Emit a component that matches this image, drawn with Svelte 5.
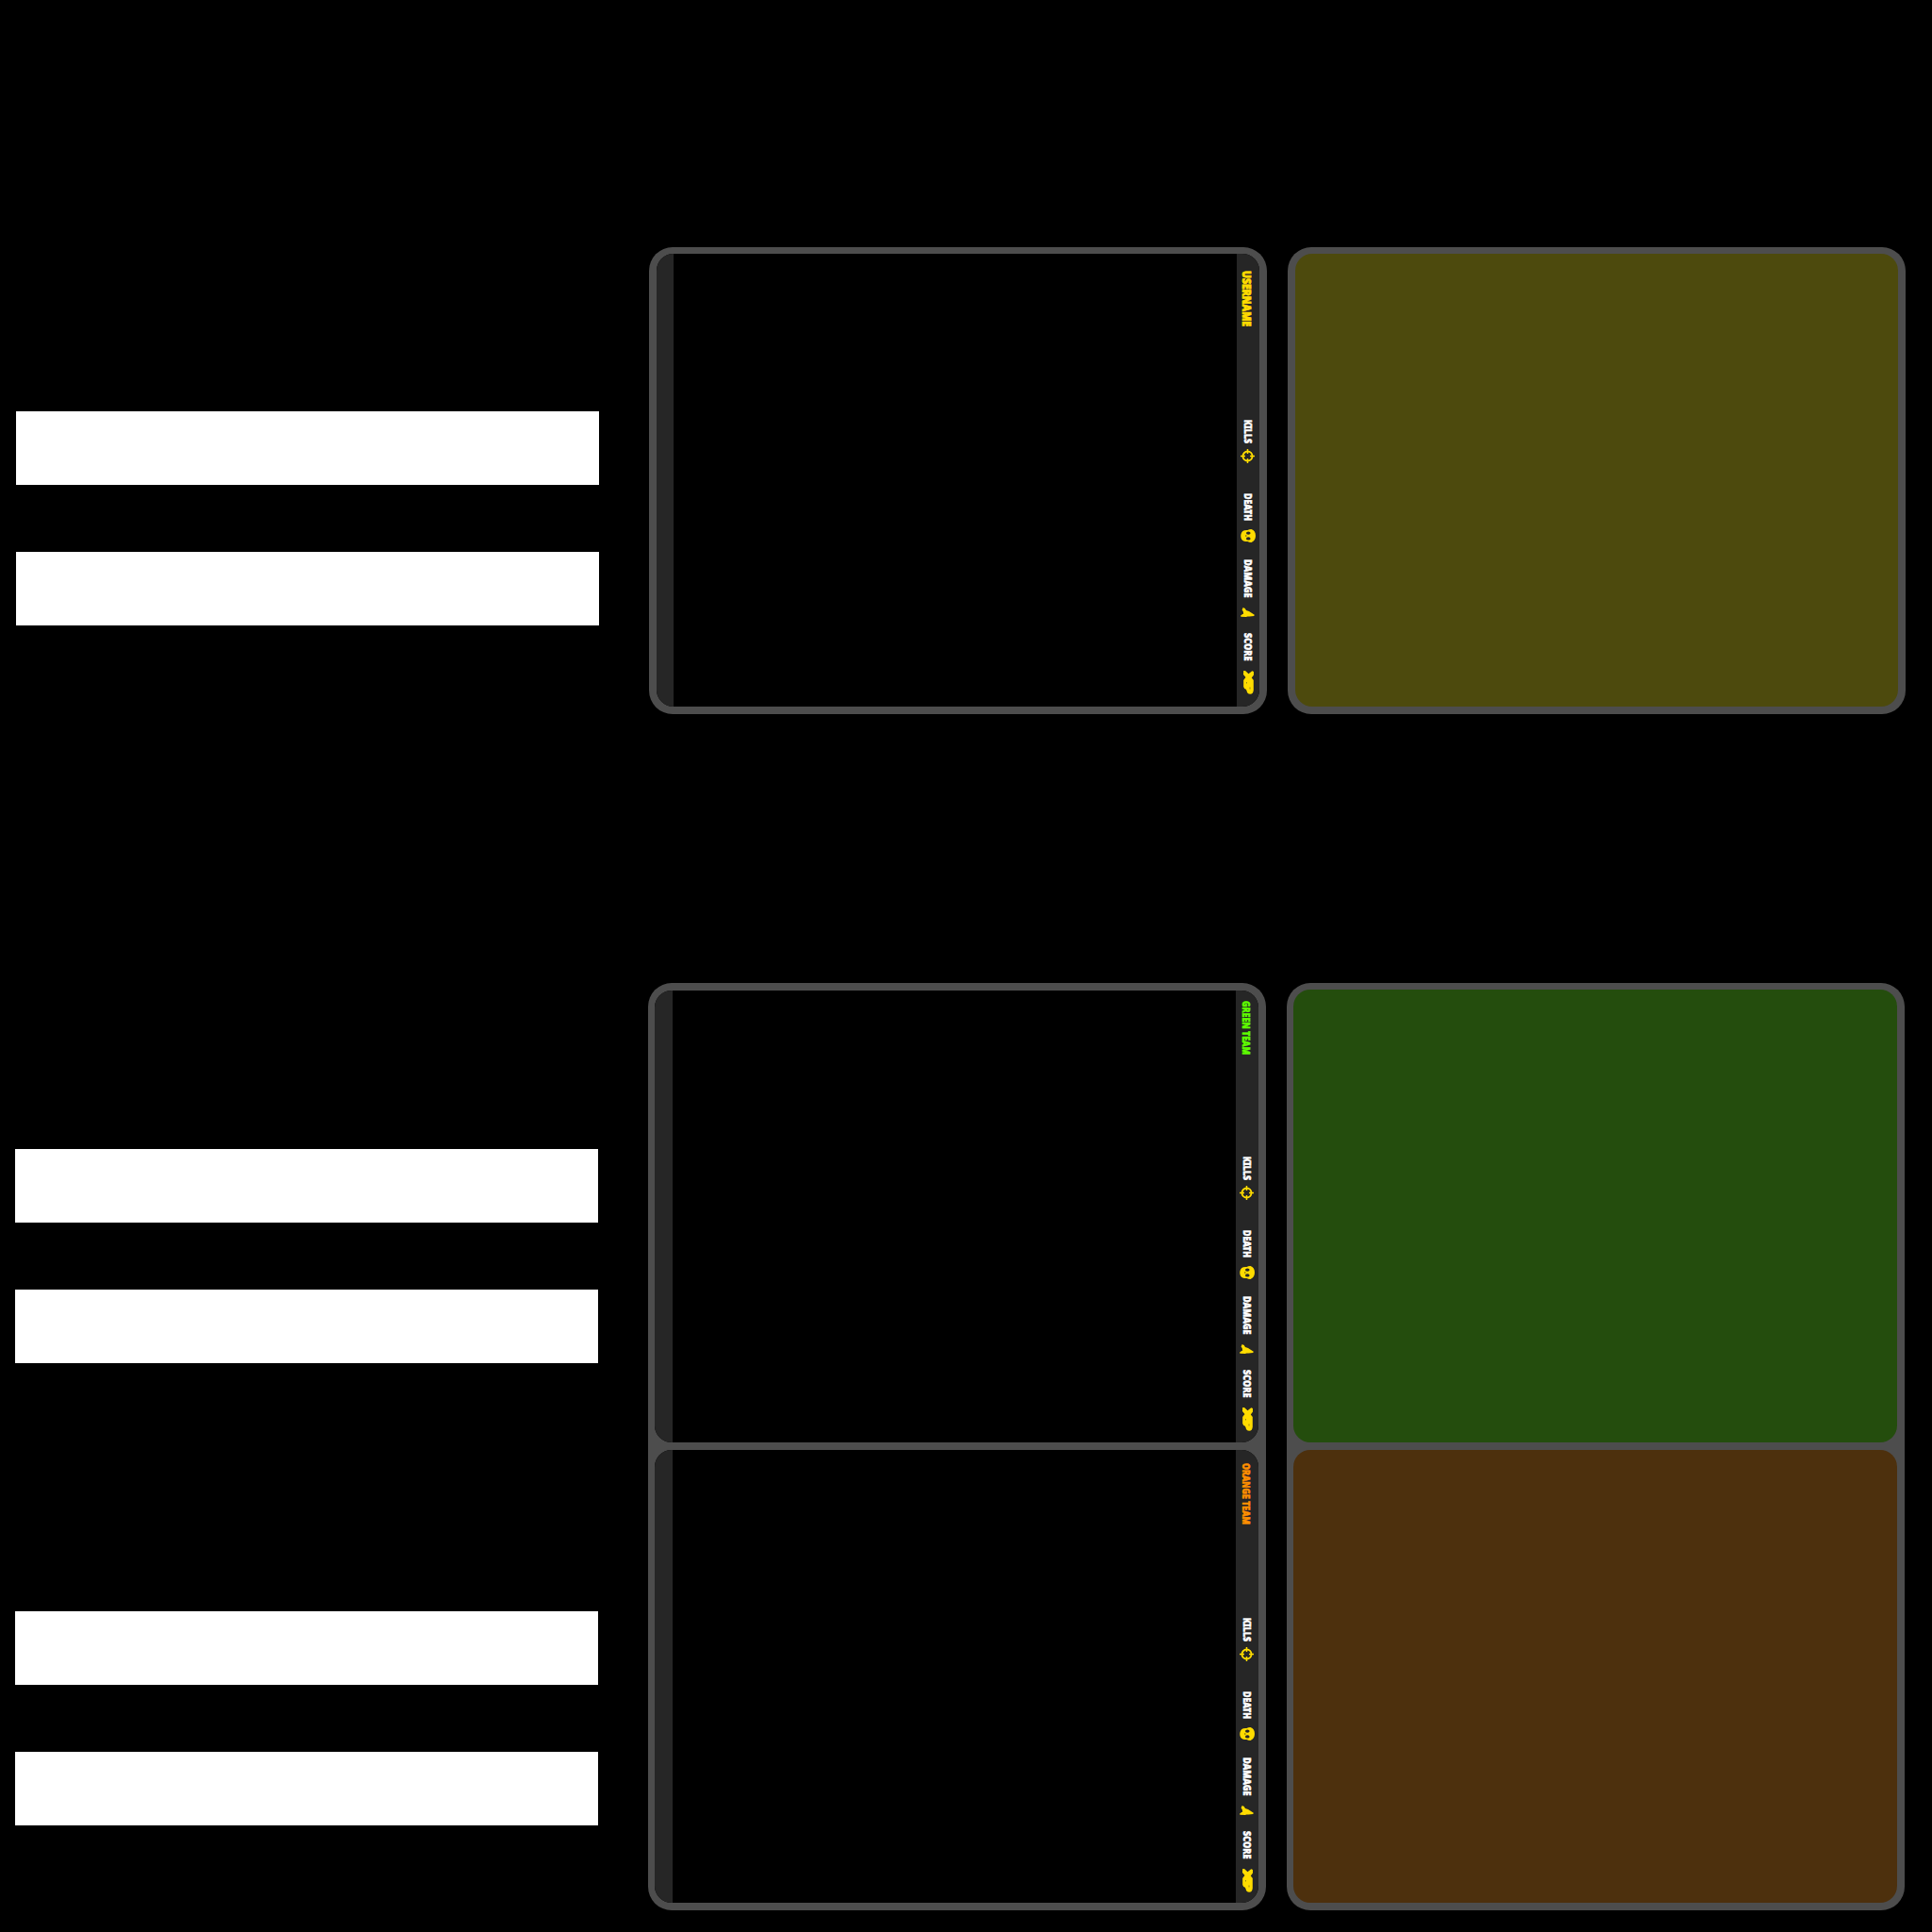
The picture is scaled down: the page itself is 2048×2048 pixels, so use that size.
<script>
  const boards = [
    {
      id: 'solo',
      panels: [{ title: 'USERNAME', tone: 'yellow', start: 18, length: 59, size: 12.5, baseline: 6.2 }]
    },
    {
      id: 'teams',
      panels: [
        { title: 'GREEN TEAM', tone: 'green', start: 11, length: 57, size: 10, baseline: 7.4 },
        { title: 'ORANGE TEAM', tone: 'orange', start: 14, length: 65, size: 10, baseline: 7.4 }
      ]
    }
  ];
  const stats = [
    { label: 'KILLS', icon: 'aim', length: 25 },
    { label: 'DEATH', icon: 'skull', length: 29 },
    { label: 'DAMAGE', icon: 'blade', length: 40.5 },
    { label: 'SCORE', icon: 'xp', length: 29.5 }
  ];
</script>

<main>
  {#each boards as board}
    <section class={board.id}>
      <div class="fields">
        {#each board.panels as panel}
          <div class="pair"><div class="field"></div><div class="field"></div></div>
        {/each}
      </div>

      <div class="frame table">
        {#each board.panels as panel}
          <div class="panel">
            <div class="edge"></div>
            <div class="screen"></div>
            <div class="strip">
              <svg class="title {panel.tone}" width="24">
                <text transform="translate({panel.baseline} {panel.start}) rotate(90)" font-size={panel.size} textLength={panel.length} lengthAdjust="spacingAndGlyphs">{panel.title}</text>
              </svg>
              {#each stats as stat}
                <svg class="label {stat.icon}-label" width="24">
                  <text transform="translate(7.600 0) rotate(90)" font-size="10.500" textLength={stat.length} lengthAdjust="spacingAndGlyphs">{stat.label}</text>
                </svg>
                {#if stat.icon === 'aim'}
                  <svg class="icon aim" width="24" height="15" viewBox="0 0 24 15">
                    <circle cx="11.500" cy="7.500" r="5" fill="none" stroke="#ffdc00" stroke-width="1.900" />
                    <path d="M11.500 0v5M11.500 10v5M4 7.500h5M14 7.500h5" stroke="#ffdc00" stroke-width="1.500" />
                  </svg>
                {:else if stat.icon === 'skull'}
                  <svg class="icon skull" width="24" height="14" viewBox="0 0 24 14">
                    <path d="M8 1.200Q10 .8 11.500 1Q13.500 0 15.500 .1C21.500 1.500 21.500 12.500 15.500 13.900Q13.500 14 11.500 13Q10 13.200 8 12.800C3 11.500 3 2.500 8 1.200Z" fill="#ffdc00" />
                    <ellipse cx="12.300" cy="4.100" rx="2.300" ry="1.700" fill="#262626" />
                    <ellipse cx="12.300" cy="9.900" rx="2.300" ry="1.700" fill="#262626" />
                    <path d="M9 6.600h1.500v.8H9z" fill="#524915" />
                  </svg>
                {:else if stat.icon === 'blade'}
                  <svg class="icon blade" width="24" height="11" viewBox="0 0 24 11">
                    <path d="M6.700 0L8.800 1L10 3L13 4.100L18.800 7.700L18.300 8.900L13.500 9.600L11.500 9.400L9.800 10L4.300 9.800V8.300L7.200 6.500L6.700 4L5.600 2.500Z" fill="#ffdc00" />
                  </svg>
                {:else}
                  <svg class="icon xp" width="24" height="25" viewBox="0 0 24 25">
                    <path d="M7.200 0H9L12.500 3.200L16.300 .3L18 1V4.500L15.800 7.500L17.800 10V20.500Q17.500 24.700 14.300 24.700Q10.800 24.500 10.500 21L9.500 19.500L8.200 19L7.200 17V10L9.500 7L7 4Z" fill="#ffdc00" />
                    <path d="M10.500 12v1.500M14 17.500v2" fill="none" stroke="#81711a" stroke-width=".8" />
                  </svg>
                {/if}
              {/each}
            </div>
          </div>
        {/each}
      </div>

      <div class="frame fills">
        {#each board.panels as panel}
          <div class="fill {panel.tone}"></div>
        {/each}
      </div>
    </section>
  {/each}
</main>

<style>
  :global(body) { background: #000; }
  main {
    width: 2048px;
    height: 2048px;
    box-sizing: border-box;
    padding-top: 262px;
    overflow: hidden;
    background: #000;
    font-family: "Noto Sans", sans-serif;
    font-weight: 900;
  }
  section { display: flex; align-items: flex-start; padding-left: 17px; }
  .solo { height: 780px; }
  .teams { padding-left: 16px; }
  .fields { width: 618px; margin-right: 53px; padding-top: 174px; display: flex; flex-direction: column; gap: 263px; }
  .teams .fields { padding-top: 176px; }
  .pair { display: flex; flex-direction: column; gap: 71px; }
  .field { height: 78px; background: #fff; }
  .frame {
    box-sizing: border-box;
    width: 655px;
    height: 495px;
    padding: 7px 8px 8px;
    border-radius: 25px;
    background: #4d4d4d;
    display: flex;
    flex-direction: column;
    gap: 8px;
  }
  .teams .frame { height: 983px; padding-left: 7px; }
  .teams .table { padding-top: 8px; }
  .teams .panel:first-child { flex: 0 0 479px; }
  .fills { margin-left: 22px; }
  .panel, .fill { flex: 1 1 0; min-height: 0; overflow: hidden; border-radius: 18px; }
  .panel { display: flex; background: #000; }
  .edge { width: 18px; background: #262626; }
  .teams .edge { width: 19px; }
  .screen { flex: 1; }
  .strip { width: 24px; background: #262626; display: flex; flex-direction: column; }
  svg { display: block; flex: none; overflow: visible; }
  text { fill: #fff; stroke: #fff; stroke-width: .5px; }
  .title { height: 176px; }
  .title.green { height: 176px; }
  .title.orange { height: 178px; }
  .title.yellow text { fill: #ffdc00; stroke: #ffdc00; stroke-width: .8px; }
  .title.green text { fill: #5fff00; stroke: #5fff00; }
  .title.orange text { fill: #ff9000; stroke: #ff9000; }
  .aim-label { height: 31px; }
  .skull-label { height: 38px; }
  .blade-label { height: 51px; }
  .xp-label { height: 40px; }
  .aim { margin-bottom: 32px; }
  .skull { margin-bottom: 18px; }
  .blade { margin-bottom: 16px; }
  .fill.yellow { background: #4d4a0d; }
  .fill.green { background: #244d0d; }
  .fill.orange { background: #4d300d; }
</style>
